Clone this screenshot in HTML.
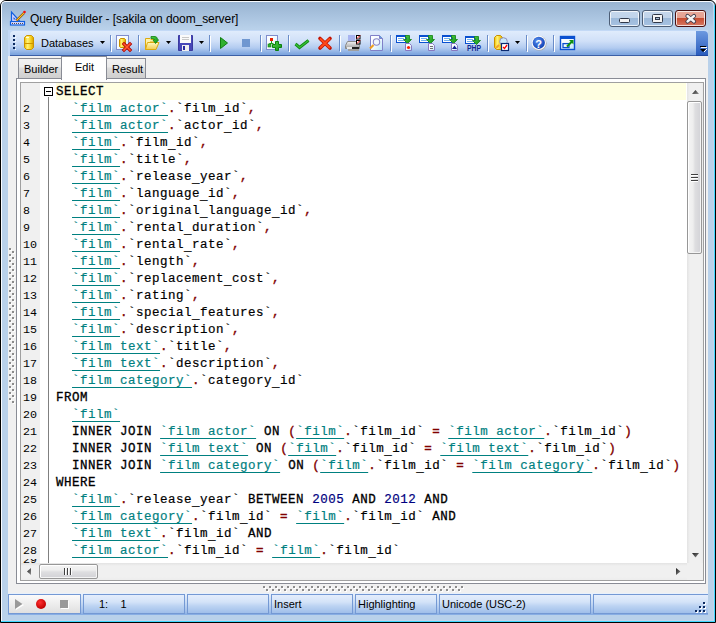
<!DOCTYPE html>
<html><head><meta charset="utf-8">
<style>
*{box-sizing:border-box;margin:0;padding:0}
html,body{width:716px;height:623px;overflow:hidden;background:#fff}
body{position:relative;font-family:"Liberation Sans",sans-serif}
.a{position:absolute}
#frame{left:0;top:0;width:716px;height:623px;background:#b9d1ea;border-radius:6px 6px 0 0;border:1px solid #000;border-right-color:#000}
#title{left:2px;top:2px;width:711px;height:28px;border-radius:4px 4px 0 0;background:linear-gradient(#99b4d1 0px,#a9c3df 14px,#b9d1ea 27px)}
#ttext{left:30px;top:12px;font-size:12px;color:#000;white-space:pre;letter-spacing:-0.08px}
.tb{top:10px;width:31px;height:17px;border:1px solid #4d5e76;border-radius:3px;background:linear-gradient(#c5d7ec 0,#c1d4ea 7px,#9cb9d9 7px,#a7c3e3 16px);box-shadow:inset 0 0 0 1px rgba(255,255,255,.75)}
#client{left:8px;top:30px;width:700px;height:585px;background:#f0f0f0}
#dock{left:8px;top:30px;width:700px;height:26px;background:#c3d9f6}
#toolbar{left:10px;top:31px;width:698px;height:25px;border-radius:4px 4px 0 0;background:linear-gradient(#e0ecfc 0px,#d0e0f8 10px,#b2cbf0 17px,#7fa6df 23px);border-bottom:1px solid #3b5fa6}
.sep{top:35px;width:2px;height:16px;border-left:1px solid #6a8ccb;border-right:1px solid #fff}
.dd{width:0;height:0;border-left:3px solid transparent;border-right:3px solid transparent;border-top:3px solid #000;top:41px}
#chev{left:696px;top:31px;width:12px;height:25px;border-radius:0 4px 0 0;background:linear-gradient(#6c99e0,#2a5cbd);border-bottom:1px solid #1f48a0}
.tab{top:58px;height:21px;border:1px solid #898c95;border-bottom:none;background:linear-gradient(#f2f2f2 0,#ebebeb 8px,#dddddd 9px,#cfcfcf 19px);font-size:11px;color:#000;padding:0 0 0 5px;line-height:20px}
#page{left:16px;top:78px;width:690px;height:506px;border:1px solid #898c95;background:#fff}
#ed{left:20px;top:82px;width:684px;height:499px;border:1px solid #a0a0a0;background:#fff;overflow:hidden}
#gutter{left:21px;top:83px;width:19px;height:480px;background:#f0f0f0}
#code{left:0;top:0}
.ln{position:absolute;left:0;margin-top:1px;height:17px;width:666px;font-family:"Liberation Mono",monospace;font-size:12.5px;letter-spacing:0.5px;line-height:17px;white-space:pre;color:#000;-webkit-text-stroke:0.2px currentColor}
.num{position:absolute;left:2px;margin-top:1px;font-family:"Liberation Mono",monospace;font-size:11.67px;line-height:17px;color:#000;white-space:pre}
.k{font-weight:normal;-webkit-text-stroke:0.3px #000}
.t{color:#008080;text-decoration:underline;text-underline-offset:3px}
.p{color:#800000;-webkit-text-stroke:0.35px #800000}
.n{color:#000080}
.u{position:relative;top:2px}
#status{left:8px;top:593px;width:700px;height:22px;background:linear-gradient(#eaf2fc 0,#c9dcf5 9px,#9fbde9 19px,#88aee4 21px)}
.sp{top:594px;height:20px;border:1px solid #7499d4;background:linear-gradient(#e4eefc 0,#d4e3f8 7px,#bcd3f2 11px,#a0bfea 18px);font-size:11px;line-height:18px;padding-left:2px;color:#000;white-space:pre}
</style></head><body>
<div id="frame" class="a"></div>
<div class="a" style="left:1px;top:1px;width:713px;height:621px;border-left:1px solid #f8fbff;border-top:1px solid #f8fbff;border-radius:5px 5px 0 0"></div>
<div class="a" style="left:714px;top:5px;width:1px;height:617px;background:#40d8ff"></div>
<div class="a" style="left:713px;top:5px;width:1px;height:616px;background:#c4d4ea"></div>
<div class="a" style="left:1px;top:621px;width:714px;height:1px;background:#40d8ff"></div>
<div class="a" style="left:2px;top:620px;width:712px;height:1px;background:#c4d4ea"></div>
<div id="title" class="a"></div>
<svg class="a" style="left:0;top:0" width="30" height="30">
<path d="M11.5 12 V21.5 H20 Z" fill="#d8d4ff" stroke="#1060e0" stroke-width="1.2"/>
<path d="M13.5 17 V19.5 H16 Z" fill="#1060e0"/>
<rect x="10.5" y="21.5" width="14" height="3.5" fill="#e0dcff" stroke="#1060e0" stroke-width="1.2"/>
<path d="M12.5 23 V24 M14.5 23 V24 M16.5 23 V24 M18.5 23 V24 M20.5 23 V24 M22.5 23 V24" stroke="#505050" stroke-width="1"/>
<path d="M16.5 20.5 L24 13" stroke="#603000" stroke-width="2.4"/>
<path d="M16.5 20.5 L24 13" stroke="#ffc020" stroke-width="1.2"/>
<circle cx="24.5" cy="12" r="1.3" fill="#f01010"/>
</svg>
<div id="ttext" class="a">Query Builder - [sakila on doom_server]</div>
<div class="a tb" style="left:609px"></div>
<div class="a tb" style="left:642px"></div>
<div class="a tb" style="left:675px;border-color:#4a1010;background:linear-gradient(#e9a99a 0,#e5a090 7px,#c74a2e 7px,#d8806a 16px)"></div>
<svg class="a" style="left:600px;top:0" width="116" height="30">
<rect x="19.5" y="18.5" width="10" height="4" rx="1" fill="#f4f4f4" stroke="#303848" stroke-width="1"/>
<rect x="52.5" y="14.5" width="10" height="8" rx="1" fill="#f4f4f4" stroke="#303848" stroke-width="1"/>
<rect x="55.5" y="17.5" width="4" height="2" fill="#a8bcd4" stroke="#303848" stroke-width="1"/>
<path d="M87.5 16 L94 21.5 M94 16 L87.5 21.5" stroke="#3a3a4a" stroke-width="4.2" stroke-linecap="round"/>
<path d="M87.5 16 L94 21.5 M94 16 L87.5 21.5" stroke="#f4f4f4" stroke-width="2.4" stroke-linecap="round"/>
</svg>
<div id="client" class="a"></div>
<div id="dock" class="a"></div>
<div id="toolbar" class="a"></div>
<div id="chev" class="a"></div>
<svg class="a" style="left:0;top:0" width="716" height="58">
<defs>
 <linearGradient id="gold" x1="0" y1="0" x2="1" y2="0"><stop offset="0" stop-color="#f0c000"/><stop offset=".35" stop-color="#fff27a"/><stop offset=".7" stop-color="#f5d020"/><stop offset="1" stop-color="#d8a000"/></linearGradient>
 <linearGradient id="fold" x1="0" y1="0" x2="0" y2="1"><stop offset="0" stop-color="#fff8c0"/><stop offset="1" stop-color="#f2cc50"/></linearGradient>
 <linearGradient id="grn" x1="0" y1="0" x2="1" y2="1"><stop offset="0" stop-color="#50d040"/><stop offset="1" stop-color="#10901a"/></linearGradient>
 <linearGradient id="pg" x1="0" y1="0" x2="1" y2="1"><stop offset="0" stop-color="#ffffff"/><stop offset=".5" stop-color="#f4faff"/><stop offset="1" stop-color="#b8e4f8"/></linearGradient>
 <linearGradient id="prn" x1="0" y1="0" x2="0" y2="1"><stop offset="0" stop-color="#f4f4f4"/><stop offset="1" stop-color="#9a9a9a"/></linearGradient>
 <radialGradient id="hlp" cx=".4" cy=".35" r=".7"><stop offset="0" stop-color="#5a90f0"/><stop offset="1" stop-color="#0a3cb0"/></radialGradient>
</defs>
<!-- gripper -->
<g fill="#0c2a60">
 <rect x="13" y="35" width="2" height="2"/><rect x="13" y="39" width="2" height="2"/><rect x="13" y="43" width="2" height="2"/><rect x="13" y="47" width="2" height="2"/>
</g>
<g fill="#fff">
 <rect x="15" y="37" width="1" height="1"/><rect x="15" y="41" width="1" height="1"/><rect x="15" y="45" width="1" height="1"/><rect x="15" y="49" width="1" height="1"/>
</g>
<!-- db icon -->
<path d="M26.5 35.5 H31.5 L33.5 37.5 V47.5 L31.5 49.5 H26.5 L24.5 47.5 V37.5 Z" fill="url(#gold)" stroke="#cc9400" stroke-width="1"/>
<path d="M25 43.5 H33" stroke="#cc9400" stroke-width="1"/>
<rect x="26" y="37" width="3" height="1" fill="#fffbe0"/>
<!-- Databases text placed as HTML -->
<!-- separators -->
<g>
 <rect x="110" y="35" width="1" height="16" fill="#6a8cc8"/><rect x="111" y="36" width="1" height="16" fill="#fff"/>
 <rect x="138" y="35" width="1" height="16" fill="#6a8cc8"/><rect x="139" y="36" width="1" height="16" fill="#fff"/>
 <rect x="209" y="35" width="1" height="16" fill="#6a8cc8"/><rect x="210" y="36" width="1" height="16" fill="#fff"/>
 <rect x="260" y="35" width="1" height="16" fill="#6a8cc8"/><rect x="261" y="36" width="1" height="16" fill="#fff"/>
 <rect x="288" y="35" width="1" height="16" fill="#6a8cc8"/><rect x="289" y="36" width="1" height="16" fill="#fff"/>
 <rect x="339" y="35" width="1" height="16" fill="#6a8cc8"/><rect x="340" y="36" width="1" height="16" fill="#fff"/>
 <rect x="390" y="35" width="1" height="16" fill="#6a8cc8"/><rect x="391" y="36" width="1" height="16" fill="#fff"/>
 <rect x="487" y="35" width="1" height="16" fill="#6a8cc8"/><rect x="488" y="36" width="1" height="16" fill="#fff"/>
 <rect x="526" y="35" width="1" height="16" fill="#6a8cc8"/><rect x="527" y="36" width="1" height="16" fill="#fff"/>
 <rect x="553" y="35" width="1" height="16" fill="#6a8cc8"/><rect x="554" y="36" width="1" height="16" fill="#fff"/>
</g>
<!-- dropdown arrows -->
<g fill="#000">
 <path d="M100 41 H105 L102.5 44 Z"/>
 <path d="M166 41 H171 L168.5 44 Z"/>
 <path d="M199 41 H204 L201.5 44 Z"/>
 <path d="M515 41 H520 L517.5 44 Z"/>
</g>
<!-- disconnect icon -->
<rect x="116.5" y="35.5" width="12" height="14" fill="url(#pg)" stroke="#7f8ccc"/>
<path d="M120.5 38.5 H124.5 L125.5 39.5 V46.5 L124.5 47.5 H120.5 L119.5 46.5 V39.5 Z" fill="url(#gold)" stroke="#c89000"/>
<path d="M124 44 L130 50 M130 44 L124 50" stroke="#b00000" stroke-width="3.2" stroke-linecap="square"/>
<path d="M124 44 L130 50 M130 44 L124 50" stroke="#ff5a30" stroke-width="1.6" stroke-linecap="square"/>
<!-- open folder -->
<path d="M145.5 38.5 H150 L151 39.5 H156.5 V42 H150 L147 49.5 H145.5 Z" fill="#fff2a8" stroke="#dcaa10"/>
<path d="M147.5 42.5 H159 L156 49.5 H145.5 Z" fill="url(#fold)" stroke="#dcaa10"/>
<path d="M151 36.5 H155 Q157 36.5 157.5 39 L158.5 40 L155.5 43.5 L153 40 L154.5 39.5 Q154 38.5 152 38.5 H151 Z" fill="url(#grn)" stroke="#108010" stroke-width=".8"/>
<!-- floppy -->
<path d="M178.5 35.5 H192.5 V50.5 H178.5 Z" fill="#4848b8" stroke="#3a3aa0"/>
<rect x="180" y="35" width="11" height="8" fill="#fafafa"/>
<rect x="182" y="37" width="7" height="1" fill="#c8c8c8"/><rect x="182" y="39" width="7" height="1" fill="#c8c8c8"/>
<rect x="182" y="45" width="7" height="6" fill="#f0f0f0"/>
<rect x="183" y="46" width="2" height="4" fill="#2a2aa0"/>
<!-- play -->
<path d="M220.5 37.5 L227.5 43 L220.5 48.5 Z" fill="#30b030" stroke="#108010"/>
<!-- stop -->
<rect x="242" y="39" width="8" height="8" fill="#7097d0"/>
<!-- add diagram -->
<rect x="266.5" y="35.5" width="11" height="14" fill="url(#pg)" stroke="#7f8ccc"/>
<rect x="270" y="38" width="3" height="3" fill="#e82000"/>
<path d="M271.5 41 V43.5 M269.5 43.5 H273.5 M269.5 43.5 V45" stroke="#20a020" stroke-width="1"/>
<rect x="268" y="44" width="3" height="3" fill="#30b030" stroke="#108010" stroke-width=".6"/>
<path d="M275.5 41.5 H278.5 V44.5 H281.5 V47.5 H278.5 V50.5 H275.5 V47.5 H272.5 V44.5 H275.5 Z" fill="url(#grn)" stroke="#0c800c"/>
<!-- check -->
<path d="M295.5 44 L299.5 47.5 L308.5 40.5" fill="none" stroke="#108a10" stroke-width="3" stroke-linejoin="miter"/>
<path d="M295.5 44 L299.5 47.5 L308.5 40.5" fill="none" stroke="#38c038" stroke-width="1.2"/>
<!-- red X -->
<path d="M320 38.5 L330 48 M330 38.5 L320 48" stroke="#c01000" stroke-width="3.6" stroke-linecap="round"/>
<path d="M320 38.5 L330 48 M330 38.5 L320 48" stroke="#ff4a18" stroke-width="2"/>
<!-- printer -->
<rect x="348" y="35" width="7" height="6" fill="#a8b4f0"/>
<path d="M347.5 41.5 H357.5 L359.5 45.5 V48.5 H345.5 V45.5 Z" fill="url(#prn)" stroke="#8a8a8a"/>
<rect x="347" y="47" width="12" height="2" fill="#e8e8e8"/>
<rect x="352" y="47" width="7" height="2" fill="#202020"/>
<rect x="348" y="49" width="11" height="2" fill="#a0a0a0"/>
<rect x="356.5" y="35.5" width="3.5" height="3.5" fill="#fff" stroke="#000"/>
<rect x="356.5" y="40.5" width="3.5" height="3.5" fill="#fff" stroke="#000"/>
<path d="M357 38.5 L360 35.5 M357 43.5 L360 40.5" stroke="#ff1010" stroke-width="1"/>
<!-- preview -->
<path d="M370.5 35.5 H379.5 L382.5 38.5 V50.5 H370.5 Z" fill="url(#pg)" stroke="#8080c8"/>
<path d="M379.5 35.5 V38.5 H382.5" fill="#60a0e0" stroke="#8080c8"/>
<circle cx="376.5" cy="42" r="3.2" fill="#eef6ff" stroke="#8a88c8" stroke-width="1.1"/>
<path d="M373.5 45 L370 48.5" stroke="#f0a020" stroke-width="2.2"/>
<!-- export icons -->
<g id="exp">
 <rect x="396" y="35" width="10" height="8" fill="#0a50d0"/>
 <rect x="397" y="37" width="8" height="5" fill="#fff"/>
 <rect x="398" y="38" width="6" height="1" fill="#70b0f0"/><rect x="398" y="40" width="6" height="1" fill="#70b0f0"/>
 <path d="M405.5 35.5 H409.5 V39.5 H411.5 L407.5 43.5 L403.5 39.5 H406.5 V37.5 H405.5 Z" fill="url(#grn)" stroke="#108010" stroke-width=".8"/>
 <path d="M405.5 43.5 H409.5 L411.5 45.5 V50.5 H405.5 Z" fill="url(#pg)" stroke="#8878c0"/>
</g>
<circle cx="408.5" cy="47.5" r="1.6" fill="#ff2000"/>
<use href="#exp" x="23"/>
<rect x="430" y="46" width="3" height="1" fill="#707070"/><rect x="430" y="48" width="3" height="1" fill="#707070"/>
<use href="#exp" x="46"/>
<path d="M452 49 L454.5 45.5 L457 49 Z" fill="#102090"/>
<g transform="translate(69 1)">
 <rect x="396" y="35" width="10" height="8" fill="#0a50d0"/>
 <rect x="397" y="37" width="8" height="5" fill="#fff"/>
 <rect x="398" y="38" width="6" height="1" fill="#70b0f0"/><rect x="398" y="40" width="6" height="1" fill="#70b0f0"/>
 <path d="M405.5 35.5 H409.5 V39.5 H411.5 L407.5 43.5 L403.5 39.5 H406.5 V37.5 H405.5 Z" fill="url(#grn)" stroke="#108010" stroke-width=".8"/>
</g>
<text x="467" y="50.8" font-family="Liberation Sans" font-weight="bold" font-size="8.2" fill="#102890" textLength="14" lengthAdjust="spacingAndGlyphs">PHP</text>
<!-- db magnifier check -->
<path d="M496.5 35.5 H500.5 L502.5 37.5 V47.5 L500.5 49.5 H496.5 L494.5 47.5 V37.5 Z" fill="url(#gold)" stroke="#c89000"/>
<circle cx="503.5" cy="41.5" r="3.8" fill="#c8e8fa" stroke="#9090b8" stroke-width="1"/>
<path d="M496 48 L499 45" stroke="#f0a030" stroke-width="2"/>
<rect x="501.5" y="43.5" width="7" height="7" fill="#fff" stroke="#0a2a70" stroke-width="1.2"/>
<path d="M503 47 L504.5 48.5 L507 45" fill="none" stroke="#ff0000" stroke-width="1.3"/>
<!-- help -->
<circle cx="539.2" cy="43.2" r="7.4" fill="#a8a8a8"/>
<circle cx="538.8" cy="42.8" r="7.2" fill="#fafafa"/>
<circle cx="538.8" cy="42.8" r="6.1" fill="url(#hlp)"/>
<text x="535.2" y="47.6" font-family="Liberation Sans" font-weight="bold" font-size="11" fill="#fff">?</text>
<!-- window icon -->
<rect x="560.5" y="36.5" width="14" height="13" fill="url(#pg)" stroke="#0a50d0" stroke-width="1.4"/>
<rect x="560" y="36" width="15" height="3" fill="#0a50d0"/>
<rect x="563" y="43.6" width="6" height="4" fill="none" stroke="#0a50d0" stroke-width="1.3"/>
<path d="M567 46.5 L572 41.5" stroke="#109010" stroke-width="2" fill="none"/>
<path d="M569 40 H573.5 V44.5 Z" fill="#109010"/>
<!-- chevron glyph -->
<rect x="700" y="46" width="6" height="1" fill="#000"/><rect x="701" y="47" width="6" height="1" fill="#fff"/>
<path d="M700 49 H706 L703 52 Z" fill="#000"/>
<path d="M704 52 L707 49" stroke="#fff" stroke-width="1"/>
</svg>
<div class="a" style="left:41px;top:37px;font-size:11px;line-height:13px;color:#000;white-space:pre">Databases</div>
<svg class="a" style="left:0;top:0" width="40" height="30">
 <path d="M11 12 L11 25 H24 V22 H14 Z" fill="none"/>
</svg>


<div class="a tab" style="left:18px;width:44px;padding-left:5px">Builder</div>
<div class="a tab" style="left:106px;width:40px;padding-left:5px">Result</div>
<svg class="a" style="left:0;top:0" width="716" height="623"><rect x="264" y="587" width="2" height="2" fill="#fff"/><rect x="263" y="586" width="2" height="2" fill="#8c8c8c"/><rect x="270" y="587" width="2" height="2" fill="#fff"/><rect x="269" y="586" width="2" height="2" fill="#8c8c8c"/><rect x="276" y="587" width="2" height="2" fill="#fff"/><rect x="275" y="586" width="2" height="2" fill="#8c8c8c"/><rect x="282" y="587" width="2" height="2" fill="#fff"/><rect x="281" y="586" width="2" height="2" fill="#8c8c8c"/><rect x="288" y="587" width="2" height="2" fill="#fff"/><rect x="287" y="586" width="2" height="2" fill="#8c8c8c"/><rect x="294" y="587" width="2" height="2" fill="#fff"/><rect x="293" y="586" width="2" height="2" fill="#8c8c8c"/><rect x="300" y="587" width="2" height="2" fill="#fff"/><rect x="299" y="586" width="2" height="2" fill="#8c8c8c"/><rect x="306" y="587" width="2" height="2" fill="#fff"/><rect x="305" y="586" width="2" height="2" fill="#8c8c8c"/><rect x="312" y="587" width="2" height="2" fill="#fff"/><rect x="311" y="586" width="2" height="2" fill="#8c8c8c"/><rect x="318" y="587" width="2" height="2" fill="#fff"/><rect x="317" y="586" width="2" height="2" fill="#8c8c8c"/><rect x="324" y="587" width="2" height="2" fill="#fff"/><rect x="323" y="586" width="2" height="2" fill="#8c8c8c"/><rect x="330" y="587" width="2" height="2" fill="#fff"/><rect x="329" y="586" width="2" height="2" fill="#8c8c8c"/><rect x="336" y="587" width="2" height="2" fill="#fff"/><rect x="335" y="586" width="2" height="2" fill="#8c8c8c"/><rect x="342" y="587" width="2" height="2" fill="#fff"/><rect x="341" y="586" width="2" height="2" fill="#8c8c8c"/><rect x="348" y="587" width="2" height="2" fill="#fff"/><rect x="347" y="586" width="2" height="2" fill="#8c8c8c"/><rect x="354" y="587" width="2" height="2" fill="#fff"/><rect x="353" y="586" width="2" height="2" fill="#8c8c8c"/><rect x="360" y="587" width="2" height="2" fill="#fff"/><rect x="359" y="586" width="2" height="2" fill="#8c8c8c"/><rect x="366" y="587" width="2" height="2" fill="#fff"/><rect x="365" y="586" width="2" height="2" fill="#8c8c8c"/><rect x="372" y="587" width="2" height="2" fill="#fff"/><rect x="371" y="586" width="2" height="2" fill="#8c8c8c"/><rect x="378" y="587" width="2" height="2" fill="#fff"/><rect x="377" y="586" width="2" height="2" fill="#8c8c8c"/><rect x="384" y="587" width="2" height="2" fill="#fff"/><rect x="383" y="586" width="2" height="2" fill="#8c8c8c"/><rect x="390" y="587" width="2" height="2" fill="#fff"/><rect x="389" y="586" width="2" height="2" fill="#8c8c8c"/><rect x="396" y="587" width="2" height="2" fill="#fff"/><rect x="395" y="586" width="2" height="2" fill="#8c8c8c"/><rect x="402" y="587" width="2" height="2" fill="#fff"/><rect x="401" y="586" width="2" height="2" fill="#8c8c8c"/><rect x="408" y="587" width="2" height="2" fill="#fff"/><rect x="407" y="586" width="2" height="2" fill="#8c8c8c"/><rect x="414" y="587" width="2" height="2" fill="#fff"/><rect x="413" y="586" width="2" height="2" fill="#8c8c8c"/><rect x="420" y="587" width="2" height="2" fill="#fff"/><rect x="419" y="586" width="2" height="2" fill="#8c8c8c"/><rect x="426" y="587" width="2" height="2" fill="#fff"/><rect x="425" y="586" width="2" height="2" fill="#8c8c8c"/><rect x="432" y="587" width="2" height="2" fill="#fff"/><rect x="431" y="586" width="2" height="2" fill="#8c8c8c"/><rect x="438" y="587" width="2" height="2" fill="#fff"/><rect x="437" y="586" width="2" height="2" fill="#8c8c8c"/><rect x="444" y="587" width="2" height="2" fill="#fff"/><rect x="443" y="586" width="2" height="2" fill="#8c8c8c"/><rect x="450" y="587" width="2" height="2" fill="#fff"/><rect x="449" y="586" width="2" height="2" fill="#8c8c8c"/><rect x="456" y="587" width="2" height="2" fill="#fff"/><rect x="455" y="586" width="2" height="2" fill="#8c8c8c"/><rect x="462" y="587" width="2" height="2" fill="#fff"/><rect x="461" y="586" width="2" height="2" fill="#8c8c8c"/><rect x="267" y="590" width="2" height="2" fill="#fff"/><rect x="266" y="589" width="2" height="2" fill="#8c8c8c"/><rect x="273" y="590" width="2" height="2" fill="#fff"/><rect x="272" y="589" width="2" height="2" fill="#8c8c8c"/><rect x="279" y="590" width="2" height="2" fill="#fff"/><rect x="278" y="589" width="2" height="2" fill="#8c8c8c"/><rect x="285" y="590" width="2" height="2" fill="#fff"/><rect x="284" y="589" width="2" height="2" fill="#8c8c8c"/><rect x="291" y="590" width="2" height="2" fill="#fff"/><rect x="290" y="589" width="2" height="2" fill="#8c8c8c"/><rect x="297" y="590" width="2" height="2" fill="#fff"/><rect x="296" y="589" width="2" height="2" fill="#8c8c8c"/><rect x="303" y="590" width="2" height="2" fill="#fff"/><rect x="302" y="589" width="2" height="2" fill="#8c8c8c"/><rect x="309" y="590" width="2" height="2" fill="#fff"/><rect x="308" y="589" width="2" height="2" fill="#8c8c8c"/><rect x="315" y="590" width="2" height="2" fill="#fff"/><rect x="314" y="589" width="2" height="2" fill="#8c8c8c"/><rect x="321" y="590" width="2" height="2" fill="#fff"/><rect x="320" y="589" width="2" height="2" fill="#8c8c8c"/><rect x="327" y="590" width="2" height="2" fill="#fff"/><rect x="326" y="589" width="2" height="2" fill="#8c8c8c"/><rect x="333" y="590" width="2" height="2" fill="#fff"/><rect x="332" y="589" width="2" height="2" fill="#8c8c8c"/><rect x="339" y="590" width="2" height="2" fill="#fff"/><rect x="338" y="589" width="2" height="2" fill="#8c8c8c"/><rect x="345" y="590" width="2" height="2" fill="#fff"/><rect x="344" y="589" width="2" height="2" fill="#8c8c8c"/><rect x="351" y="590" width="2" height="2" fill="#fff"/><rect x="350" y="589" width="2" height="2" fill="#8c8c8c"/><rect x="357" y="590" width="2" height="2" fill="#fff"/><rect x="356" y="589" width="2" height="2" fill="#8c8c8c"/><rect x="363" y="590" width="2" height="2" fill="#fff"/><rect x="362" y="589" width="2" height="2" fill="#8c8c8c"/><rect x="369" y="590" width="2" height="2" fill="#fff"/><rect x="368" y="589" width="2" height="2" fill="#8c8c8c"/><rect x="375" y="590" width="2" height="2" fill="#fff"/><rect x="374" y="589" width="2" height="2" fill="#8c8c8c"/><rect x="381" y="590" width="2" height="2" fill="#fff"/><rect x="380" y="589" width="2" height="2" fill="#8c8c8c"/><rect x="387" y="590" width="2" height="2" fill="#fff"/><rect x="386" y="589" width="2" height="2" fill="#8c8c8c"/><rect x="393" y="590" width="2" height="2" fill="#fff"/><rect x="392" y="589" width="2" height="2" fill="#8c8c8c"/><rect x="399" y="590" width="2" height="2" fill="#fff"/><rect x="398" y="589" width="2" height="2" fill="#8c8c8c"/><rect x="405" y="590" width="2" height="2" fill="#fff"/><rect x="404" y="589" width="2" height="2" fill="#8c8c8c"/><rect x="411" y="590" width="2" height="2" fill="#fff"/><rect x="410" y="589" width="2" height="2" fill="#8c8c8c"/><rect x="417" y="590" width="2" height="2" fill="#fff"/><rect x="416" y="589" width="2" height="2" fill="#8c8c8c"/><rect x="423" y="590" width="2" height="2" fill="#fff"/><rect x="422" y="589" width="2" height="2" fill="#8c8c8c"/><rect x="429" y="590" width="2" height="2" fill="#fff"/><rect x="428" y="589" width="2" height="2" fill="#8c8c8c"/><rect x="435" y="590" width="2" height="2" fill="#fff"/><rect x="434" y="589" width="2" height="2" fill="#8c8c8c"/><rect x="441" y="590" width="2" height="2" fill="#fff"/><rect x="440" y="589" width="2" height="2" fill="#8c8c8c"/><rect x="447" y="590" width="2" height="2" fill="#fff"/><rect x="446" y="589" width="2" height="2" fill="#8c8c8c"/><rect x="453" y="590" width="2" height="2" fill="#fff"/><rect x="452" y="589" width="2" height="2" fill="#8c8c8c"/><rect x="459" y="590" width="2" height="2" fill="#fff"/><rect x="458" y="589" width="2" height="2" fill="#8c8c8c"/><rect x="10" y="249" width="2" height="2" fill="#fff"/><rect x="9" y="248" width="2" height="2" fill="#8c8c8c"/><rect x="13" y="252" width="2" height="2" fill="#fff"/><rect x="12" y="251" width="2" height="2" fill="#8c8c8c"/><rect x="10" y="255" width="2" height="2" fill="#fff"/><rect x="9" y="254" width="2" height="2" fill="#8c8c8c"/><rect x="13" y="258" width="2" height="2" fill="#fff"/><rect x="12" y="257" width="2" height="2" fill="#8c8c8c"/><rect x="10" y="261" width="2" height="2" fill="#fff"/><rect x="9" y="260" width="2" height="2" fill="#8c8c8c"/><rect x="13" y="264" width="2" height="2" fill="#fff"/><rect x="12" y="263" width="2" height="2" fill="#8c8c8c"/><rect x="10" y="267" width="2" height="2" fill="#fff"/><rect x="9" y="266" width="2" height="2" fill="#8c8c8c"/><rect x="13" y="270" width="2" height="2" fill="#fff"/><rect x="12" y="269" width="2" height="2" fill="#8c8c8c"/><rect x="10" y="273" width="2" height="2" fill="#fff"/><rect x="9" y="272" width="2" height="2" fill="#8c8c8c"/><rect x="13" y="276" width="2" height="2" fill="#fff"/><rect x="12" y="275" width="2" height="2" fill="#8c8c8c"/><rect x="10" y="279" width="2" height="2" fill="#fff"/><rect x="9" y="278" width="2" height="2" fill="#8c8c8c"/><rect x="13" y="282" width="2" height="2" fill="#fff"/><rect x="12" y="281" width="2" height="2" fill="#8c8c8c"/><rect x="10" y="285" width="2" height="2" fill="#fff"/><rect x="9" y="284" width="2" height="2" fill="#8c8c8c"/><rect x="13" y="288" width="2" height="2" fill="#fff"/><rect x="12" y="287" width="2" height="2" fill="#8c8c8c"/><rect x="10" y="291" width="2" height="2" fill="#fff"/><rect x="9" y="290" width="2" height="2" fill="#8c8c8c"/><rect x="13" y="294" width="2" height="2" fill="#fff"/><rect x="12" y="293" width="2" height="2" fill="#8c8c8c"/><rect x="10" y="297" width="2" height="2" fill="#fff"/><rect x="9" y="296" width="2" height="2" fill="#8c8c8c"/><rect x="13" y="300" width="2" height="2" fill="#fff"/><rect x="12" y="299" width="2" height="2" fill="#8c8c8c"/><rect x="10" y="303" width="2" height="2" fill="#fff"/><rect x="9" y="302" width="2" height="2" fill="#8c8c8c"/><rect x="13" y="306" width="2" height="2" fill="#fff"/><rect x="12" y="305" width="2" height="2" fill="#8c8c8c"/><rect x="10" y="309" width="2" height="2" fill="#fff"/><rect x="9" y="308" width="2" height="2" fill="#8c8c8c"/><rect x="13" y="312" width="2" height="2" fill="#fff"/><rect x="12" y="311" width="2" height="2" fill="#8c8c8c"/><rect x="10" y="315" width="2" height="2" fill="#fff"/><rect x="9" y="314" width="2" height="2" fill="#8c8c8c"/><rect x="13" y="318" width="2" height="2" fill="#fff"/><rect x="12" y="317" width="2" height="2" fill="#8c8c8c"/><rect x="10" y="321" width="2" height="2" fill="#fff"/><rect x="9" y="320" width="2" height="2" fill="#8c8c8c"/><rect x="13" y="324" width="2" height="2" fill="#fff"/><rect x="12" y="323" width="2" height="2" fill="#8c8c8c"/><rect x="10" y="327" width="2" height="2" fill="#fff"/><rect x="9" y="326" width="2" height="2" fill="#8c8c8c"/><rect x="13" y="330" width="2" height="2" fill="#fff"/><rect x="12" y="329" width="2" height="2" fill="#8c8c8c"/><rect x="10" y="333" width="2" height="2" fill="#fff"/><rect x="9" y="332" width="2" height="2" fill="#8c8c8c"/><rect x="13" y="336" width="2" height="2" fill="#fff"/><rect x="12" y="335" width="2" height="2" fill="#8c8c8c"/><rect x="10" y="339" width="2" height="2" fill="#fff"/><rect x="9" y="338" width="2" height="2" fill="#8c8c8c"/><rect x="13" y="342" width="2" height="2" fill="#fff"/><rect x="12" y="341" width="2" height="2" fill="#8c8c8c"/><rect x="10" y="345" width="2" height="2" fill="#fff"/><rect x="9" y="344" width="2" height="2" fill="#8c8c8c"/><rect x="13" y="348" width="2" height="2" fill="#fff"/><rect x="12" y="347" width="2" height="2" fill="#8c8c8c"/><rect x="10" y="351" width="2" height="2" fill="#fff"/><rect x="9" y="350" width="2" height="2" fill="#8c8c8c"/><rect x="13" y="354" width="2" height="2" fill="#fff"/><rect x="12" y="353" width="2" height="2" fill="#8c8c8c"/><rect x="10" y="357" width="2" height="2" fill="#fff"/><rect x="9" y="356" width="2" height="2" fill="#8c8c8c"/><rect x="13" y="360" width="2" height="2" fill="#fff"/><rect x="12" y="359" width="2" height="2" fill="#8c8c8c"/><rect x="10" y="363" width="2" height="2" fill="#fff"/><rect x="9" y="362" width="2" height="2" fill="#8c8c8c"/><rect x="13" y="366" width="2" height="2" fill="#fff"/><rect x="12" y="365" width="2" height="2" fill="#8c8c8c"/><rect x="10" y="369" width="2" height="2" fill="#fff"/><rect x="9" y="368" width="2" height="2" fill="#8c8c8c"/><rect x="13" y="372" width="2" height="2" fill="#fff"/><rect x="12" y="371" width="2" height="2" fill="#8c8c8c"/><rect x="10" y="375" width="2" height="2" fill="#fff"/><rect x="9" y="374" width="2" height="2" fill="#8c8c8c"/><rect x="13" y="378" width="2" height="2" fill="#fff"/><rect x="12" y="377" width="2" height="2" fill="#8c8c8c"/><rect x="10" y="381" width="2" height="2" fill="#fff"/><rect x="9" y="380" width="2" height="2" fill="#8c8c8c"/><rect x="13" y="384" width="2" height="2" fill="#fff"/><rect x="12" y="383" width="2" height="2" fill="#8c8c8c"/><rect x="10" y="387" width="2" height="2" fill="#fff"/><rect x="9" y="386" width="2" height="2" fill="#8c8c8c"/><rect x="13" y="390" width="2" height="2" fill="#fff"/><rect x="12" y="389" width="2" height="2" fill="#8c8c8c"/><rect x="10" y="393" width="2" height="2" fill="#fff"/><rect x="9" y="392" width="2" height="2" fill="#8c8c8c"/><rect x="13" y="396" width="2" height="2" fill="#fff"/><rect x="12" y="395" width="2" height="2" fill="#8c8c8c"/><rect x="10" y="399" width="2" height="2" fill="#fff"/><rect x="9" y="398" width="2" height="2" fill="#8c8c8c"/><rect x="13" y="402" width="2" height="2" fill="#fff"/><rect x="12" y="401" width="2" height="2" fill="#8c8c8c"/></svg>
<div id="page" class="a"></div>
<div class="a" style="left:61px;top:56px;width:46px;height:24px;background:#fff;border:1px solid #898c95;border-bottom:none;font-size:11px;line-height:20px;padding-left:13px">Edit</div>
<div id="ed" class="a"></div>
<div class="a" id="edc" style="left:21px;top:83px;width:665px;height:480px;overflow:hidden;background:#fff">
<div class="a" style="left:0;top:0;width:19px;height:480px;background:#f0f0f0"></div>
<div class="a" style="left:35px;top:0;width:630px;height:17px;background:#ffffe1"></div>
<div class="a" style="left:27px;top:14px;width:1px;height:466px;background:#808080"></div>
<div class="a" style="left:23px;top:4px;width:9px;height:9px;border:1px solid #000;background:#fff"></div>
<div class="a" style="left:25px;top:8px;width:5px;height:1px;background:#000"></div>
<div class="a" style="left:0;top:0">
<div class="num" style="top:17px">2</div>
<div class="num" style="top:34px">3</div>
<div class="num" style="top:51px">4</div>
<div class="num" style="top:68px">5</div>
<div class="num" style="top:85px">6</div>
<div class="num" style="top:102px">7</div>
<div class="num" style="top:119px">8</div>
<div class="num" style="top:136px">9</div>
<div class="num" style="top:153px">10</div>
<div class="num" style="top:170px">11</div>
<div class="num" style="top:187px">12</div>
<div class="num" style="top:204px">13</div>
<div class="num" style="top:221px">14</div>
<div class="num" style="top:238px">15</div>
<div class="num" style="top:255px">16</div>
<div class="num" style="top:272px">17</div>
<div class="num" style="top:289px">18</div>
<div class="num" style="top:306px">19</div>
<div class="num" style="top:323px">20</div>
<div class="num" style="top:340px">21</div>
<div class="num" style="top:357px">22</div>
<div class="num" style="top:374px">23</div>
<div class="num" style="top:391px">24</div>
<div class="num" style="top:408px">25</div>
<div class="num" style="top:425px">26</div>
<div class="num" style="top:442px">27</div>
<div class="num" style="top:459px">28</div>
<div class="a" style="left:0;top:476px;width:19px;height:4px;overflow:hidden"><div class="num" style="top:-8px">29</div></div>
</div>
<div class="a" style="left:35px;top:0">
<div class="ln" style="top:0px"><span class="k">SELECT</span></div>
<div class="ln" style="top:17px">  <span class="t">`film actor`</span><span class="p">.</span>`film<span class="u">_</span>id`<span class="p">,</span></div>
<div class="ln" style="top:34px">  <span class="t">`film actor`</span><span class="p">.</span>`actor<span class="u">_</span>id`<span class="p">,</span></div>
<div class="ln" style="top:51px">  <span class="t">`film`</span><span class="p">.</span>`film<span class="u">_</span>id`<span class="p">,</span></div>
<div class="ln" style="top:68px">  <span class="t">`film`</span><span class="p">.</span>`title`<span class="p">,</span></div>
<div class="ln" style="top:85px">  <span class="t">`film`</span><span class="p">.</span>`release<span class="u">_</span>year`<span class="p">,</span></div>
<div class="ln" style="top:102px">  <span class="t">`film`</span><span class="p">.</span>`language<span class="u">_</span>id`<span class="p">,</span></div>
<div class="ln" style="top:119px">  <span class="t">`film`</span><span class="p">.</span>`original<span class="u">_</span>language<span class="u">_</span>id`<span class="p">,</span></div>
<div class="ln" style="top:136px">  <span class="t">`film`</span><span class="p">.</span>`rental<span class="u">_</span>duration`<span class="p">,</span></div>
<div class="ln" style="top:153px">  <span class="t">`film`</span><span class="p">.</span>`rental<span class="u">_</span>rate`<span class="p">,</span></div>
<div class="ln" style="top:170px">  <span class="t">`film`</span><span class="p">.</span>`length`<span class="p">,</span></div>
<div class="ln" style="top:187px">  <span class="t">`film`</span><span class="p">.</span>`replacement<span class="u">_</span>cost`<span class="p">,</span></div>
<div class="ln" style="top:204px">  <span class="t">`film`</span><span class="p">.</span>`rating`<span class="p">,</span></div>
<div class="ln" style="top:221px">  <span class="t">`film`</span><span class="p">.</span>`special<span class="u">_</span>features`<span class="p">,</span></div>
<div class="ln" style="top:238px">  <span class="t">`film`</span><span class="p">.</span>`description`<span class="p">,</span></div>
<div class="ln" style="top:255px">  <span class="t">`film text`</span><span class="p">.</span>`title`<span class="p">,</span></div>
<div class="ln" style="top:272px">  <span class="t">`film text`</span><span class="p">.</span>`description`<span class="p">,</span></div>
<div class="ln" style="top:289px">  <span class="t">`film category`</span><span class="p">.</span>`category<span class="u">_</span>id`</div>
<div class="ln" style="top:306px"><span class="k">FROM</span></div>
<div class="ln" style="top:323px">  <span class="t">`film`</span></div>
<div class="ln" style="top:340px">  <span class="k">INNER</span> <span class="k">JOIN</span> <span class="t">`film actor`</span> <span class="k">ON</span> <span class="p">(</span><span class="t">`film`</span><span class="p">.</span>`film<span class="u">_</span>id` <span class="p">=</span> <span class="t">`film actor`</span><span class="p">.</span>`film<span class="u">_</span>id`<span class="p">)</span></div>
<div class="ln" style="top:357px">  <span class="k">INNER</span> <span class="k">JOIN</span> <span class="t">`film text`</span> <span class="k">ON</span> <span class="p">(</span><span class="t">`film`</span><span class="p">.</span>`film<span class="u">_</span>id` <span class="p">=</span> <span class="t">`film text`</span><span class="p">.</span>`film<span class="u">_</span>id`<span class="p">)</span></div>
<div class="ln" style="top:374px">  <span class="k">INNER</span> <span class="k">JOIN</span> <span class="t">`film category`</span> <span class="k">ON</span> <span class="p">(</span><span class="t">`film`</span><span class="p">.</span>`film<span class="u">_</span>id` <span class="p">=</span> <span class="t">`film category`</span><span class="p">.</span>`film<span class="u">_</span>id`<span class="p">)</span></div>
<div class="ln" style="top:391px"><span class="k">WHERE</span></div>
<div class="ln" style="top:408px">  <span class="t">`film`</span><span class="p">.</span>`release<span class="u">_</span>year` <span class="k">BETWEEN</span> <span class="n">2005</span> <span class="k">AND</span> <span class="n">2012</span> <span class="k">AND</span></div>
<div class="ln" style="top:425px">  <span class="t">`film category`</span><span class="p">.</span>`film<span class="u">_</span>id` <span class="p">=</span> <span class="t">`film`</span><span class="p">.</span>`film<span class="u">_</span>id` <span class="k">AND</span></div>
<div class="ln" style="top:442px">  <span class="t">`film text`</span><span class="p">.</span>`film<span class="u">_</span>id` <span class="k">AND</span></div>
<div class="ln" style="top:459px">  <span class="t">`film actor`</span><span class="p">.</span>`film<span class="u">_</span>id` <span class="p">=</span> <span class="t">`film`</span><span class="p">.</span>`film<span class="u">_</span>id`</div>
<div class="ln" style="top:476px"></div>
</div>
</div>
</div>



<div class="a" id="vsb" style="left:687px;top:83px;width:16px;height:480px;background:linear-gradient(90deg,#e3e3e3 0,#f0f0f0 3px,#f0f0f0 13px,#ececec 16px)">
 <svg class="a" style="left:0;top:0" width="16" height="480">
  <defs><linearGradient id="ag" x1="0" y1="0" x2="1" y2="1"><stop offset="0" stop-color="#202020"/><stop offset="1" stop-color="#909090"/></linearGradient></defs>
  <path d="M5 11 L12 11 L8.5 7 Z" fill="url(#ag)"/>
  <path d="M5 470 L12 470 L8.5 474.5 Z" fill="url(#ag)"/>
 </svg>
 <div class="a" style="left:0;top:18px;width:15px;height:153px;border:1px solid #979797;border-radius:2px;background:linear-gradient(90deg,#f4f4f4 0,#eeeeee 5px,#dedee0 7px,#d4d4d8 12px,#c8c8cc 13px);box-shadow:inset 1px 1px 0 #fff,inset -1px -1px 0 #f4f4f4"></div>
 <div class="a" style="left:4px;top:91px;width:7px;height:1px;background:#404040;box-shadow:0 1px 0 #fff,0 3px 0 #404040,0 4px 0 #fff,0 6px 0 #404040,0 7px 0 #fff"></div>
</div>
<div class="a" id="hsb" style="left:21px;top:563px;width:666px;height:17px;background:linear-gradient(#e3e3e3 0,#f0f0f0 3px,#f0f0f0 14px,#ececec 17px)">
 <svg class="a" style="left:0;top:0" width="666" height="17">
  <path d="M10 5 L10 12 L6 8.5 Z" fill="url(#ag)"/>
  <path d="M655 5 L655 12 L659.5 8.5 Z" fill="url(#ag)"/>
 </svg>
 <div class="a" style="left:18px;top:1px;width:59px;height:15px;border:1px solid #979797;border-radius:2px;background:linear-gradient(#f4f4f4 0,#eeeeee 5px,#dedee0 7px,#d4d4d8 12px,#c8c8cc 13px);box-shadow:inset 1px 1px 0 #fff,inset -1px -1px 0 #f4f4f4"></div>
 <div class="a" style="left:43px;top:5px;width:1px;height:7px;background:#404040;box-shadow:1px 0 0 #fff,3px 0 0 #404040,4px 0 0 #fff,6px 0 0 #404040,7px 0 0 #fff"></div>
</div>
<div class="a" style="left:687px;top:563px;width:16px;height:17px;background:#f0f0f0"></div>
<div id="status" class="a"></div>
<div class="a sp" style="left:8px;width:73px;background:linear-gradient(#fbfbfb,#e0e0e0)"></div>
<div class="a sp" style="left:83px;width:102px;padding-left:15px">1:    1</div>
<div class="a sp" style="left:187px;width:82px"></div>
<div class="a sp" style="left:271px;width:82px">Insert</div>
<div class="a sp" style="left:355px;width:82px">Highlighting</div>
<div class="a sp" style="left:439px;width:152px">Unicode (USC-2)</div>
<div class="a sp" style="left:593px;width:115px;border-right:none"></div>
<svg class="a" style="left:0;top:580px" width="716" height="43">
<path d="M15 19 L23 24 L15 29 Z" fill="#fff" transform="translate(1 1)"/>
<path d="M15 19 L22.5 24 L15 29 Z" fill="#9a9a9a"/>
<defs><radialGradient id="rec" cx=".4" cy=".35" r=".65"><stop offset="0" stop-color="#ff3030"/><stop offset="1" stop-color="#c00000"/></radialGradient></defs>
<circle cx="41" cy="24" r="5" fill="url(#rec)"/>
<rect x="61" y="21" width="8" height="8" fill="#fff"/>
<rect x="60" y="20" width="8" height="8" fill="#9a9a9a"/>
<rect x="704" y="23" width="2" height="2" fill="#fff"/><rect x="700" y="27" width="2" height="2" fill="#fff"/><rect x="704" y="27" width="2" height="2" fill="#fff"/><rect x="696" y="31" width="2" height="2" fill="#fff"/><rect x="700" y="31" width="2" height="2" fill="#fff"/><rect x="704" y="31" width="2" height="2" fill="#fff"/><rect x="703" y="22" width="2" height="2" fill="#0c2a60"/><rect x="699" y="26" width="2" height="2" fill="#0c2a60"/><rect x="703" y="26" width="2" height="2" fill="#0c2a60"/><rect x="695" y="30" width="2" height="2" fill="#0c2a60"/><rect x="699" y="30" width="2" height="2" fill="#0c2a60"/><rect x="703" y="30" width="2" height="2" fill="#0c2a60"/>
</svg>
</body></html>
